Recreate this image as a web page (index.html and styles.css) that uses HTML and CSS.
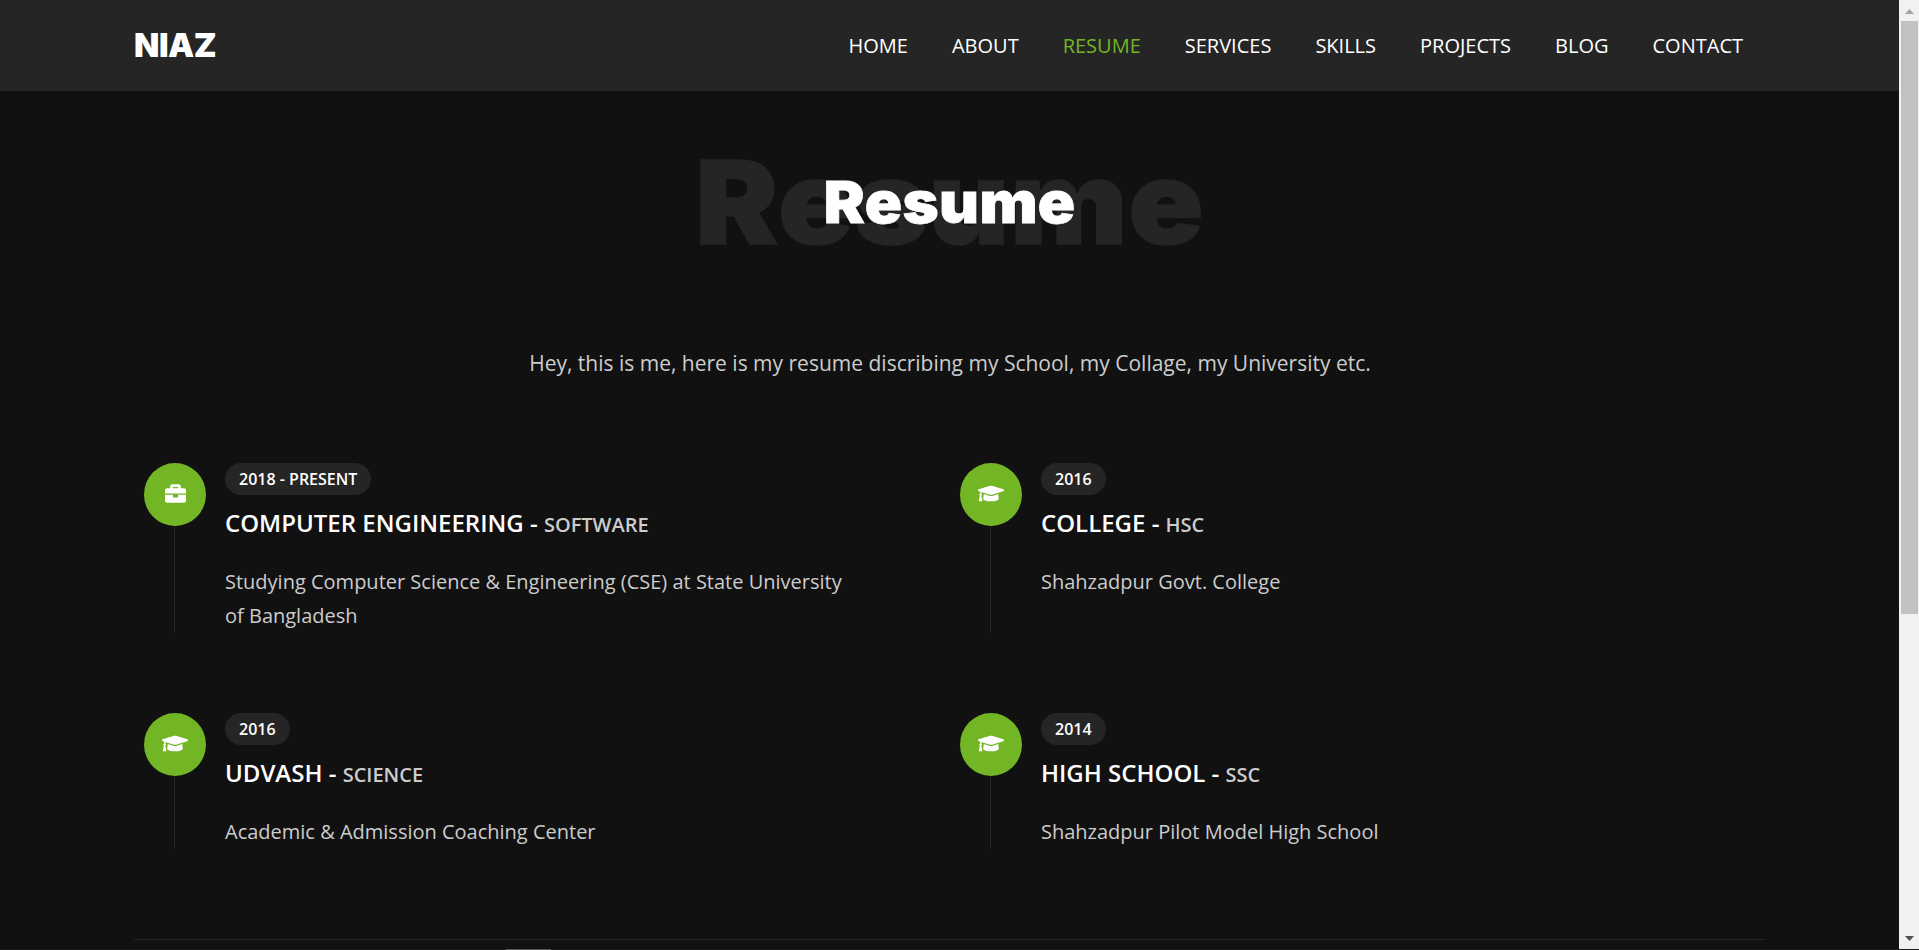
FILE: index.html
```html
<!DOCTYPE html>
<html lang="en">
<head>
<meta charset="utf-8">
<title>Niaz - Resume</title>
<link rel="stylesheet" href="styles.css">
</head>
<body>
<svg class="symbols" aria-hidden="true">
  <symbol id="briefcase" viewBox="0 0 512 512"><path d="M320 336c0 8.84-7.16 16-16 16h-96c-8.84 0-16-7.16-16-16v-48H0v144c0 25.6 22.4 48 48 48h416c25.6 0 48-22.4 48-48V288H320v48zm144-208h-80V80c0-25.6-22.4-48-48-48H176c-25.6 0-48 22.4-48 48v48H48c-25.6 0-48 22.4-48 48v80h512v-80c0-25.6-22.4-48-48-48zm-144 0H192V96h128v32z"/></symbol>
  <symbol id="cap" viewBox="0 0 640 512"><path d="M622.34 153.2L343.4 67.5c-15.2-4.67-31.6-4.67-46.79 0L17.66 153.2c-23.54 7.23-23.54 38.36 0 45.59l48.63 14.94c-10.67 13.19-17.23 29.28-17.88 46.9C38.78 266.15 32 276.11 32 288c0 10.78 5.68 19.85 13.86 25.65L20.33 428.53C18.11 438.52 25.71 448 35.94 448h56.11c10.24 0 17.84-9.48 15.62-19.47L82.14 313.65C90.32 307.85 96 298.78 96 288c0-11.57-6.47-21.25-15.66-26.87.76-15.02 8.44-28.3 20.69-36.72L296.6 284.5c9.06 2.78 26.44 6.25 46.79 0l278.95-85.7c23.55-7.24 23.55-38.36 0-45.6zM352.79 315.09c-28.53 8.76-52.84 3.92-65.59 0l-145.02-44.55L128 384c0 35.35 85.96 64 192 64s192-28.65 192-64l-14.18-113.47-145.03 44.56z"/></symbol>
</svg>
<div class="window">
  <div class="page">
    <header class="header">
      <a class="logo">NIAZ</a>
      <nav class="nav">
        <a>HOME</a><a>ABOUT</a><a class="active">RESUME</a><a>SERVICES</a><a>SKILLS</a><a>PROJECTS</a><a>BLOG</a><a>CONTACT</a>
      </nav>
    </header>
    <main class="resume">
      <div class="heading">
        <span class="heading-back">Resume</span>
        <h1 class="heading-front">Resume</h1>
      </div>
      <p class="intro">Hey, this is me, here is my resume discribing my School, my Collage, my University etc.</p>
      <div class="timeline">
        <article class="item">
          <div class="rail"><span class="dot"><svg class="icon"><use href="#briefcase"/></svg></span></div>
          <div class="body">
            <span class="date">2018 - PRESENT</span>
            <h2 class="title">COMPUTER ENGINEERING - <span class="sub">SOFTWARE</span></h2>
            <p class="text">Studying Computer Science &amp; Engineering (CSE) at State University of Bangladesh</p>
          </div>
        </article>
        <article class="item">
          <div class="rail"><span class="dot"><svg class="icon icon-wide"><use href="#cap"/></svg></span></div>
          <div class="body">
            <span class="date">2016</span>
            <h2 class="title">COLLEGE - <span class="sub">HSC</span></h2>
            <p class="text">Shahzadpur Govt. College</p>
          </div>
        </article>
        <article class="item">
          <div class="rail"><span class="dot"><svg class="icon icon-wide"><use href="#cap"/></svg></span></div>
          <div class="body">
            <span class="date">2016</span>
            <h2 class="title">UDVASH - <span class="sub">SCIENCE</span></h2>
            <p class="text">Academic &amp; Admission Coaching Center</p>
          </div>
        </article>
        <article class="item">
          <div class="rail"><span class="dot"><svg class="icon icon-wide"><use href="#cap"/></svg></span></div>
          <div class="body">
            <span class="date">2014</span>
            <h2 class="title">HIGH SCHOOL - <span class="sub">SSC</span></h2>
            <p class="text">Shahzadpur Pilot Model High School</p>
          </div>
        </article>
      </div>
      <hr class="divider">
    </main>
  </div>
  <div class="scrollbar">
    <svg class="arrow arrow-up" viewBox="0 0 9 5"><path d="M4.5 0L9 5H0z"/></svg>
    <div class="thumb"></div>
    <svg class="arrow arrow-down" viewBox="0 0 9 5"><path d="M4.5 5L9 0H0z"/></svg>
  </div>
</div>
<div class="edge"><span class="edge-mark"></span></div>
</body>
</html>
```

FILE: styles.css
```css
* { box-sizing: border-box; margin: 0; padding: 0; }

body {
  display: flex;
  flex-direction: column;
  height: 950px;
  overflow: hidden;
  background: #111;
  color: #ccc;
  font-family: "Open Sans", "Noto Sans", sans-serif;
  font-size: 20px;
  line-height: 34px;
}

.symbols { display: none; }

.window { display: flex; height: 949px; }
.page { width: 1899px; }

.header {
  display: flex;
  justify-content: space-between;
  align-items: center;
  height: 91px;
  padding: 0 134px;
  background: #252525;
}
.logo {
  padding-bottom: 2px;
  font-family: Inter, sans-serif;
  font-size: 33px;
  font-weight: 900;
  letter-spacing: -0.5px;
  color: #fff;
}
.nav { display: flex; }
.nav a { padding: 0 22px; color: #fff; }
.nav .active { color: #72b626; }

.resume { padding: 0 133px 0 134px; }

.heading {
  display: grid;
  justify-items: center;
  align-items: center;
  height: 222px;
  font-family: Inter, sans-serif;
  font-weight: 900;
}
.heading-back, .heading-front {
  grid-area: 1 / 1;
  white-space: nowrap;
  transform: scaleX(1.07);
}
.heading-back {
  font-size: 116px;
  line-height: 120px;
  letter-spacing: 1px;
  color: #252525;
  -webkit-text-stroke: 1.5px #252525;
}
.heading-front {
  font-size: 57.5px;
  line-height: 60px;
  font-weight: 900;
  letter-spacing: 0.4px;
  color: #fff;
  -webkit-text-stroke: 0.8px #fff;
}

.intro {
  padding-top: 33px;
  height: 150px;
  font-size: 21px;
  text-align: center;
}

.timeline {
  display: grid;
  grid-template-columns: 816px 816px;
  row-gap: 80px;
}
.item { display: flex; gap: 19px; padding: 0 95px 0 10px; }
.rail {
  flex: none;
  width: 62px;
  background: linear-gradient(#252525, #252525) 30px 0 / 1px 100% no-repeat;
}
.dot {
  display: flex;
  align-items: center;
  justify-content: center;
  width: 62px;
  height: 63px;
  padding-bottom: 2px;
  border-radius: 50%;
  background: #72b626;
}
.icon { width: 21px; height: 21px; fill: #fff; }
.icon-wide { width: 26px; }

.date {
  display: block;
  width: fit-content;
  height: 32px;
  padding: 0 14px;
  border-radius: 16px;
  background: #252525;
  color: #fff;
  font-size: 16px;
  font-weight: 600;
  line-height: 32px;
}
.title {
  margin: 11px 0 26px;
  color: #fff;
  font-size: 24px;
  font-weight: 600;
  line-height: 33px;
}
.sub { color: #ccc; font-size: 20px; line-height: 1; }

.divider { margin-top: 90px; height: 1px; border: 0; background: #252525; }

.scrollbar {
  display: flex;
  flex-direction: column;
  align-items: center;
  width: 20px;
  padding: 9px 0 8px 1px;
  background: #f1f1f1;
}
.arrow { width: 9px; height: 5px; }
.arrow-up { fill: #a3a3a3; }
.arrow-down { margin-top: auto; fill: #505050; }
.thumb { width: 17px; height: 593px; margin-top: 7px; background: #c1c1c1; }

.edge { height: 1px; padding-left: 506px; background: #1c1a1c; }
.edge-mark { display: block; width: 45px; height: 1px; background: #555; }
```
